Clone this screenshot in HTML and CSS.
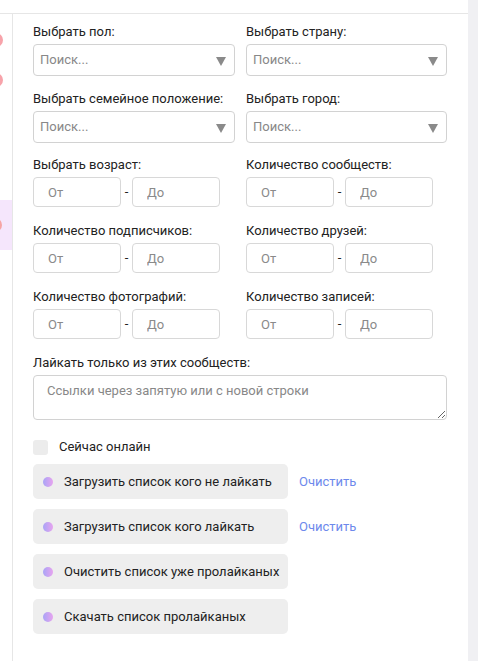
FILE: index.html
```html
<!DOCTYPE html>
<html lang="ru">
<head>
<meta charset="utf-8">
<title>Фильтры</title>
<link rel="stylesheet" href="styles.css">
</head>
<body>
<div class="app">
  <div class="panel">
    <div class="topbar"></div>
    <div class="body">
      <aside class="side">
        <span class="side-dot side-dot--first"></span>
        <span class="side-dot side-dot--second"></span>
        <div class="side-active"><span class="side-dot"></span></div>
      </aside>
      <main class="content">
        <div class="row row--select">
          <div class="field">
            <label class="label">Выбрать пол:</label>
            <div class="select"><span class="select-text">Поиск...</span><span class="arrow"></span></div>
          </div>
          <div class="field">
            <label class="label">Выбрать страну:</label>
            <div class="select"><span class="select-text">Поиск...</span><span class="arrow"></span></div>
          </div>
        </div>
        <div class="row row--select">
          <div class="field">
            <label class="label">Выбрать семейное положение:</label>
            <div class="select"><span class="select-text">Поиск...</span><span class="arrow"></span></div>
          </div>
          <div class="field">
            <label class="label">Выбрать город:</label>
            <div class="select"><span class="select-text">Поиск...</span><span class="arrow"></span></div>
          </div>
        </div>
        <div class="row row--range">
          <div class="field">
            <label class="label">Выбрать возраст:</label>
            <div class="range"><input class="num" placeholder="От"><span class="dash">-</span><input class="num" placeholder="До"></div>
          </div>
          <div class="field">
            <label class="label">Количество сообществ:</label>
            <div class="range"><input class="num" placeholder="От"><span class="dash">-</span><input class="num" placeholder="До"></div>
          </div>
        </div>
        <div class="row row--range">
          <div class="field">
            <label class="label">Количество подписчиков:</label>
            <div class="range"><input class="num" placeholder="От"><span class="dash">-</span><input class="num" placeholder="До"></div>
          </div>
          <div class="field">
            <label class="label">Количество друзей:</label>
            <div class="range"><input class="num" placeholder="От"><span class="dash">-</span><input class="num" placeholder="До"></div>
          </div>
        </div>
        <div class="row row--range">
          <div class="field">
            <label class="label">Количество фотографий:</label>
            <div class="range"><input class="num" placeholder="От"><span class="dash">-</span><input class="num" placeholder="До"></div>
          </div>
          <div class="field">
            <label class="label">Количество записей:</label>
            <div class="range"><input class="num" placeholder="От"><span class="dash">-</span><input class="num" placeholder="До"></div>
          </div>
        </div>
        <div class="field field--wide">
          <label class="label">Лайкать только из этих сообществ:</label>
          <textarea class="area" placeholder="Ссылки через запятую или с новой строки"></textarea>
        </div>
        <div class="check">
          <span class="box"></span>
          <span class="check-text">Сейчас онлайн</span>
        </div>
        <div class="actions">
          <div class="action">
            <div class="btn"><span class="dot"></span>Загрузить список кого не лайкать</div>
            <a class="link">Очистить</a>
          </div>
          <div class="action">
            <div class="btn"><span class="dot"></span>Загрузить список кого лайкать</div>
            <a class="link">Очистить</a>
          </div>
          <div class="action">
            <div class="btn"><span class="dot"></span>Очистить список уже пролайканых</div>
          </div>
          <div class="action">
            <div class="btn"><span class="dot"></span>Скачать список пролайканых</div>
          </div>
        </div>
      </main>
    </div>
  </div>
  <div class="rightbar"></div>
</div>
</body>
</html>
```

FILE: styles.css
```css
* { box-sizing: border-box; }
html, body { margin: 0; padding: 0; background: #fff; }
body {
  font-family: Roboto, "Liberation Sans", Arial, sans-serif;
  font-size: 13px;
  line-height: 16px;
  color: #222;
}
.app { display: flex; height: 661px; overflow: hidden; }
.panel { flex: 1; display: flex; flex-direction: column; }
.topbar { height: 14px; border-bottom: 1px solid #e6e6e6; flex: none; }
.body { flex: 1; display: flex; }
.side {
  width: 13px;
  flex: none;
  border-right: 1px solid #e6e6e6;
  overflow: hidden;
  padding-top: 19px;
  display: flex;
  flex-direction: column;
}
.side-dot {
  display: block;
  width: 14px;
  height: 14px;
  border-radius: 50%;
  background: #f7a3aa;
  margin-left: -11px;
  flex: none;
}
.side-dot--second { margin-top: 26px; }
.side-active {
  margin-top: 113px;
  height: 50px;
  background: #f5e6fc;
  display: flex;
  align-items: center;
}
.side-active .side-dot { margin-left: -12px; background: #f6a4a4; }
.content { flex: 1; padding: 10px 0 0 20px; }
.row {
  display: grid;
  grid-template-columns: 202px 201px;
  column-gap: 11px;
}
.row--select { margin-bottom: 14.5px; }
.row--range { margin-bottom: 16px; }
.label { display: block; margin-bottom: 4px; color: #222; }
.select {
  height: 32px;
  border: 1px solid #d2d2d2;
  border-radius: 4px;
  display: flex;
  align-items: center;
  padding: 0 8px 0 6px;
}
.select-text { flex: 1; color: #888; }
.arrow {
  width: 0;
  height: 0;
  border-left: 5px solid transparent;
  border-right: 5px solid transparent;
  border-top: 9px solid #8a8a8a;
  margin-top: 3px;
}
.range { display: flex; align-items: center; }
.num {
  width: 88px;
  height: 30px;
  border: 1px solid #d8d8d8;
  border-radius: 4px;
  padding: 0 0 0 14px;
  font: inherit;
  color: #222;
  outline: none;
  background: #fff;
}
.num::placeholder { color: #8a8a8a; }
.dash { width: 11px; text-align: center; color: #222; }
.field--wide { width: 414px; }
.area {
  display: block;
  width: 414px;
  height: 45px;
  border: 1px solid #d2d2d2;
  border-radius: 4px;
  padding: 7px 13px;
  font: inherit;
  color: #222;
  resize: vertical;
  outline: none;
}
.area::placeholder { color: #888; }
.check { display: flex; align-items: center; margin-top: 19px; height: 16px; }
.box { width: 15px; height: 15px; border-radius: 3px; background: #ececec; }
.check-text { margin-left: 11px; }
.actions { margin-top: 9px; display: flex; flex-direction: column; gap: 10px; }
.action { display: flex; align-items: center; }
.btn {
  width: 255px;
  height: 35px;
  background: #eeeeee;
  border-radius: 5px;
  display: flex;
  align-items: center;
  padding-left: 10px;
  color: #222;
}
.dot {
  width: 10px;
  height: 10px;
  border-radius: 50%;
  background: linear-gradient(90deg, #a9a4f6, #e7a4ef);
  margin-right: 11px;
  flex: none;
}
.link { margin-left: 11px; color: #6d89ec; cursor: pointer; }
.rightbar { width: 10px; flex: none; background: #f0f0f3; }
```
